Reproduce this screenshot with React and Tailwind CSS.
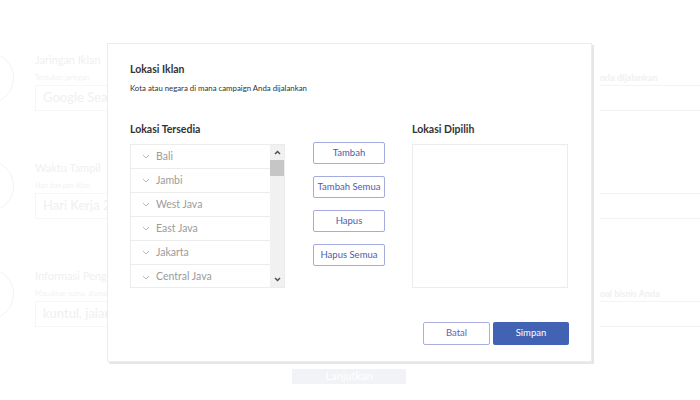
import React from "react";

const font = { fontFamily: "Lato, 'Open Sans', sans-serif" };

function Chevron() {
  return (
    <svg width="8" height="5" viewBox="0 0 8 5" className="shrink-0">
      <polyline points="1,1 4,4 7,1" fill="none" stroke="#b8b8b8" strokeWidth="1" />
    </svg>
  );
}

function BgSection({ title, sub, value }) {
  return (
    <div className="h-[108px] flex">
      <div className="w-[52px] h-[52px] rounded-full border border-[#f3f3f3] shrink-0" />
      <div className="ml-[21px] pt-[2px] w-[200px]">
        <div className="text-[11px] leading-[11px] text-[#f0f0f0] whitespace-nowrap">{title}</div>
        <div className="mt-[9px] text-[7px] leading-[7px] text-[#f2f2f2] whitespace-nowrap">{sub}</div>
        <div className="mt-[4px] h-[26px] border border-[#f6f6f6] flex items-center pl-[7px] text-[13px] text-[#f0f0f0] whitespace-nowrap">
          {value}
        </div>
      </div>
    </div>
  );
}

function RightBgSection({ sub }) {
  return (
    <div className="h-[108px] pt-[2px]">
      <div className="h-[11px]" />
      <div className="mt-[9px] h-[7px] text-[9px] leading-[7px] font-bold text-[#f0f0f0] whitespace-nowrap">{sub}</div>
      <div className="mt-[4px] h-[26px] border-y border-[#f3f3f3]" />
    </div>
  );
}

const items = ["Bali", "Jambi", "West Java", "East Java", "Jakarta", "Central Java"];

function SideButton({ children }) {
  return (
    <button className="w-[72px] h-[22px] rounded-[2px] border border-[#a3abdf] bg-white text-[9.5px] text-[#4d5cae] leading-none">
      {children}
    </button>
  );
}

export default function App() {
  return (
    <div className="relative w-[700px] h-[400px] overflow-hidden bg-white" style={font}>
      {/* background page */}
      <div className="flex">
        <div className="ml-[-38px] pt-[52px] w-[273px] shrink-0">
          <BgSection title="Jaringan Iklan" sub="Tentukan jaringan" value="Google Search" />
          <BgSection title="Waktu Tampil" sub="Hari dan jam iklan" value="Hari Kerja 24 Jam" />
          <BgSection title="Informasi Pengiklan" sub="Masukkan nama, alamat" value="kuntul, jalan" />
        </div>
        <div className="ml-[365px] pt-[52px] w-[100px] shrink-0">
          <RightBgSection sub="nda dijalankan" />
          <RightBgSection sub="" />
          <RightBgSection sub="oal bisnis Anda" />
        </div>
      </div>
      <div className="absolute left-[292px] top-[369px] w-[114px] h-[15px] bg-[#f2f3f7] flex items-center justify-center text-[11px] text-white">
        Lanjutkan
      </div>

      {/* modal */}
      <div className="absolute left-[107px] top-[43px] w-[485px] bg-white border border-[#ececec] shadow-[2px_2px_0_#e6e6e6] px-[22px] pt-[19px] pb-[16px]">
        <div className="text-[10.5px] leading-[13px] font-bold text-[#333]">Lokasi Iklan</div>
        <div className="mt-[7px] text-[7.8px] leading-[10px] text-[#333]">
          Kota atau negara di mana campaign Anda dijalankan
        </div>

        <div className="mt-[30px] flex">
          <div className="w-[155px]">
            <div className="text-[10.5px] leading-[13px] font-bold text-[#333]">Lokasi Tersedia</div>
            <div className="mt-[8px] h-[144px] border border-[#ececec] flex">
              <div className="flex-1">
                {items.map((it, i) => (
                  <div
                    key={it}
                    className={
                      "h-[24px] flex items-center pl-[11px] gap-[6px] text-[10.5px] text-[#9c9c9c] " +
                      (i < items.length - 1 ? "border-b border-[#ececec]" : "")
                    }
                  >
                    <Chevron />
                    <span>{it}</span>
                  </div>
                ))}
              </div>
              <div className="w-[14px] bg-[#f1f1f1] flex flex-col items-center">
                <div className="h-[15px] flex items-center justify-center">
                  <svg width="7" height="5" viewBox="0 0 7 5">
                    <polyline points="1,4 3.5,1.5 6,4" fill="none" stroke="#505050" strokeWidth="1.5" />
                  </svg>
                </div>
                <div className="w-[14px] h-[16px] bg-[#c6c6c6]" />
                <div className="flex-1" />
                <div className="h-[15px] flex items-center justify-center">
                  <svg width="7" height="5" viewBox="0 0 7 5">
                    <polyline points="1,1 3.5,3.5 6,1" fill="none" stroke="#505050" strokeWidth="1.5" />
                  </svg>
                </div>
              </div>
            </div>
          </div>

          <div className="ml-[28px] w-[72px] pt-[19px] flex flex-col gap-[12px]">
            <SideButton>Tambah</SideButton>
            <SideButton>Tambah Semua</SideButton>
            <SideButton>Hapus</SideButton>
            <SideButton>Hapus Semua</SideButton>
          </div>

          <div className="ml-[27px] w-[156px]">
            <div className="text-[10.5px] leading-[13px] font-bold text-[#333]">Lokasi Dipilih</div>
            <div className="mt-[8px] h-[144px] border border-[#ececec]" />
          </div>
        </div>

        <div className="mt-[34px] flex justify-end gap-[3px]">
          <button className="w-[67px] h-[23px] rounded-[2px] border border-[#a9b0e0] bg-white text-[9.5px] text-[#5b67b0]">
            Batal
          </button>
          <button className="w-[76px] h-[23px] rounded-[2px] bg-[#4262b3] text-[9.5px] text-white">
            Simpan
          </button>
        </div>
      </div>
    </div>
  );
}
